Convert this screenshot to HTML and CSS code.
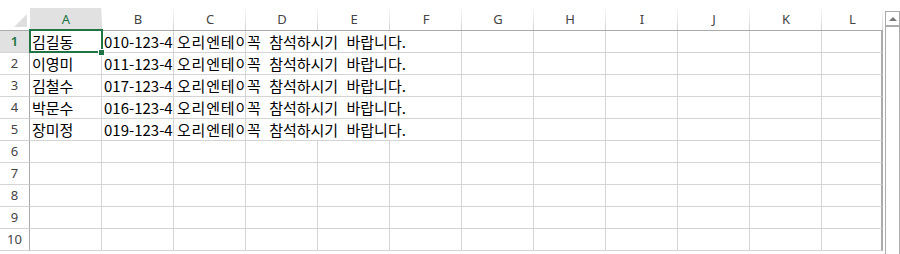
FILE: index.html
```html
<!DOCTYPE html>
<html>
  <head>
    <link rel="stylesheet" href="styles.css">
  </head>

  <body>
    <div class="app">
      <div class="sheet">
        <div class="corner"></div>
        <div class="col-head active">A</div>
        <div class="col-head">B</div>
        <div class="col-head">C</div>
        <div class="col-head">D</div>
        <div class="col-head">E</div>
        <div class="col-head">F</div>
        <div class="col-head">G</div>
        <div class="col-head">H</div>
        <div class="col-head">I</div>
        <div class="col-head">J</div>
        <div class="col-head">K</div>
        <div class="col-head">L</div>

        <div class="row-head active">1</div>
        <div class="cell selected">김길동</div>
        <div class="cell">010-123-4567</div>
        <div class="cell course">오리엔테이션</div>
        <div class="cell wide">꼭 참석하시기 바랍니다.</div>
        <div class="cell"></div><div class="cell"></div><div class="cell"></div><div class="cell"></div><div class="cell"></div><div class="cell last"></div>

        <div class="row-head">2</div>
        <div class="cell">이영미</div>
        <div class="cell">011-123-4567</div>
        <div class="cell course">오리엔테이션</div>
        <div class="cell wide">꼭 참석하시기 바랍니다.</div>
        <div class="cell"></div><div class="cell"></div><div class="cell"></div><div class="cell"></div><div class="cell"></div><div class="cell last"></div>

        <div class="row-head">3</div>
        <div class="cell">김철수</div>
        <div class="cell">017-123-4567</div>
        <div class="cell course">오리엔테이션</div>
        <div class="cell wide">꼭 참석하시기 바랍니다.</div>
        <div class="cell"></div><div class="cell"></div><div class="cell"></div><div class="cell"></div><div class="cell"></div><div class="cell last"></div>

        <div class="row-head">4</div>
        <div class="cell">박문수</div>
        <div class="cell">016-123-4567</div>
        <div class="cell course">오리엔테이션</div>
        <div class="cell wide">꼭 참석하시기 바랍니다.</div>
        <div class="cell"></div><div class="cell"></div><div class="cell"></div><div class="cell"></div><div class="cell"></div><div class="cell last"></div>

        <div class="row-head">5</div>
        <div class="cell">장미정</div>
        <div class="cell">019-123-4567</div>
        <div class="cell course">오리엔테이션</div>
        <div class="cell wide">꼭 참석하시기 바랍니다.</div>
        <div class="cell"></div><div class="cell"></div><div class="cell"></div><div class="cell"></div><div class="cell"></div><div class="cell last"></div>

        <div class="row-head">6</div>
        <div class="cell"></div><div class="cell"></div><div class="cell"></div><div class="cell"></div><div class="cell"></div><div class="cell"></div>
        <div class="cell"></div><div class="cell"></div><div class="cell"></div><div class="cell"></div><div class="cell"></div><div class="cell last"></div>

        <div class="row-head">7</div>
        <div class="cell"></div><div class="cell"></div><div class="cell"></div><div class="cell"></div><div class="cell"></div><div class="cell"></div>
        <div class="cell"></div><div class="cell"></div><div class="cell"></div><div class="cell"></div><div class="cell"></div><div class="cell last"></div>

        <div class="row-head">8</div>
        <div class="cell"></div><div class="cell"></div><div class="cell"></div><div class="cell"></div><div class="cell"></div><div class="cell"></div>
        <div class="cell"></div><div class="cell"></div><div class="cell"></div><div class="cell"></div><div class="cell"></div><div class="cell last"></div>

        <div class="row-head">9</div>
        <div class="cell"></div><div class="cell"></div><div class="cell"></div><div class="cell"></div><div class="cell"></div><div class="cell"></div>
        <div class="cell"></div><div class="cell"></div><div class="cell"></div><div class="cell"></div><div class="cell"></div><div class="cell last"></div>

        <div class="row-head">10</div>
        <div class="cell"></div><div class="cell"></div><div class="cell"></div><div class="cell"></div><div class="cell"></div><div class="cell"></div>
        <div class="cell"></div><div class="cell"></div><div class="cell"></div><div class="cell"></div><div class="cell"></div><div class="cell last"></div>
      </div>

      <div class="vscroll">
        <div class="up-btn"><span class="arrow"></span></div>
      </div>
    </div>
  </body>
</html>
```

FILE: styles.css
```css
body {
  margin: 0;
  background-color: #fff;
  font-family: "Noto Sans", Arial, sans-serif;
  overflow: hidden;
}

.app {
  display: flex;
  height: 254px;
}

.sheet {
  display: grid;
  grid-template-columns: 30px repeat(11, 72px) 61px;
  grid-template-rows: 23px repeat(10, 22px);
  width: 883px;
  padding-top: 8px;
  overflow: hidden;
}

.sheet > div {
  box-sizing: border-box;
}

.corner {
  position: relative;
  border-bottom: 1px solid #ababab;
}

.corner::after {
  content: "";
  position: absolute;
  right: 3px;
  bottom: 3px;
  width: 0;
  height: 0;
  border-left: 13px solid transparent;
  border-bottom: 13px solid #dfdfdf;
}

.col-head {
  border-bottom: 1px solid #ababab;
  background: linear-gradient(to bottom, #fafafa, #d2d2d2) right top / 1px 100% no-repeat;
  color: #444;
  font-size: 13px;
  line-height: 22px;
  text-align: center;
}

.col-head.active {
  background-color: #e1e1e1;
  color: #217346;
}

.row-head {
  border-right: 1px solid #ababab;
  border-bottom: 1px solid #d4d4d4;
  color: #444;
  font-size: 13px;
  line-height: 21px;
  text-align: center;
}

.row-head.active {
  background-color: #e1e1e1;
  color: #217346;
  font-weight: 600;
}

.cell {
  border-right: 1px solid #d4d4d4;
  border-bottom: 1px solid #d4d4d4;
  padding-left: 2px;
  font-family: "Noto Sans CJK KR", "Noto Sans", sans-serif;
  font-size: 15px;
  line-height: 21px;
  color: #000;
  white-space: nowrap;
  overflow: hidden;
}

.cell.course {
  padding-left: 3px;
  letter-spacing: 0.8px;
}

.cell.wide {
  grid-column: span 3;
  padding-left: 1px;
  word-spacing: 5px;
}

.cell.last {
  border-right: 2px solid #ababab;
}

.cell.selected {
  position: relative;
  overflow: visible;
}

.cell.selected::after {
  content: "";
  position: absolute;
  left: -1px;
  top: -2px;
  width: 74px;
  height: 24px;
  border: 2px solid #217346;
  box-sizing: border-box;
}

.cell.selected::before {
  content: "";
  position: absolute;
  left: 69px;
  top: 19px;
  width: 5px;
  height: 5px;
  background-color: #217346;
  box-shadow: 0 0 0 1px #fff;
  z-index: 1;
}

.vscroll {
  box-sizing: border-box;
  width: 15px;
  margin-left: 2px;
  margin-top: 11px;
  border: 1px solid #ababab;
  border-bottom: none;
}

.up-btn {
  height: 13px;
  border-bottom: 2px solid #ababab;
  display: flex;
  justify-content: center;
  align-items: center;
}

.arrow {
  width: 0;
  height: 0;
  border-left: 4px solid transparent;
  border-right: 4px solid transparent;
  border-bottom: 4px solid #777;
}
```
